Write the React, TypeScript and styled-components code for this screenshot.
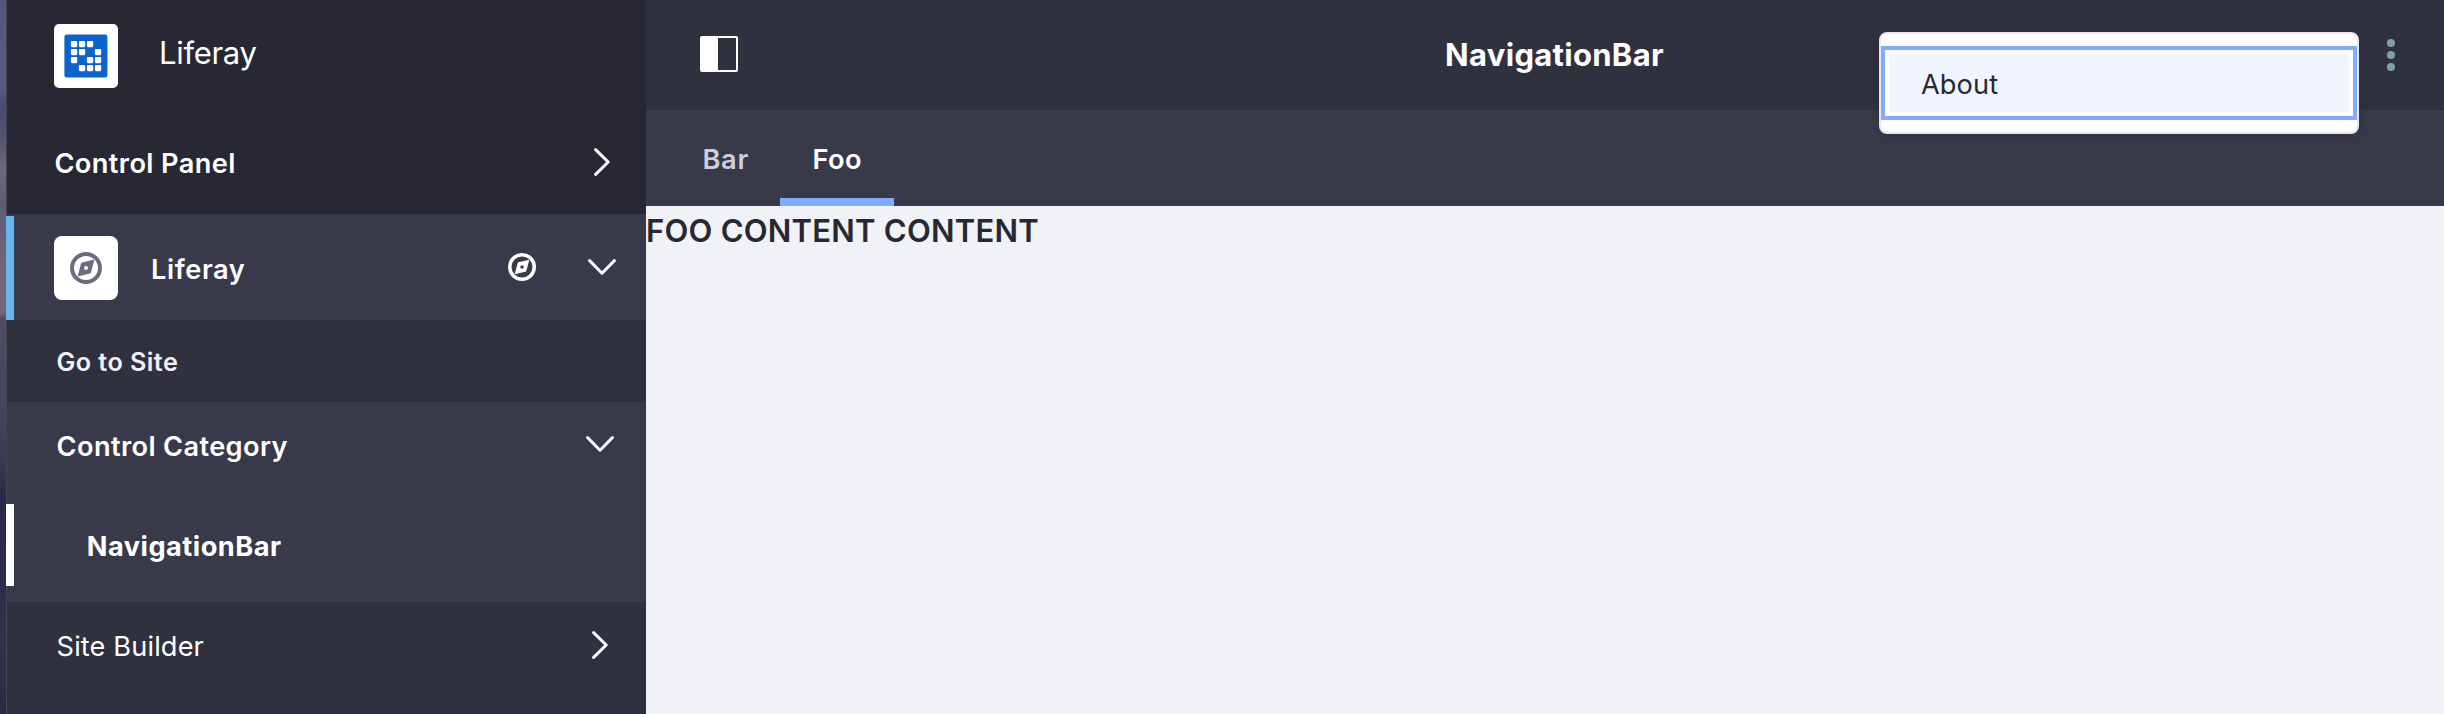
import React from "react";
import styled, { createGlobalStyle } from "styled-components";

const GlobalStyle = createGlobalStyle`
  *, *::before, *::after { box-sizing: border-box; }
  body {
    margin: 0;
    font-family: Inter, "Liberation Sans", sans-serif;
    background: #f1f2f5;
    color: #272833;
    overflow: hidden;
  }
`;

const Page = styled.div`
  display: flex;
  height: 714px;
`;

const DesktopEdge = styled.div`
  width: 6px;
  flex: none;
  background: linear-gradient(
    #525780 0, #5a5d86 85px, #484a70 106px, #55536f 140px, #6d6880 168px,
    #5e5c76 200px, #74657a 275px, #78667a 312px, #4f4c62 320px, #454660 400px,
    #3d3c58 450px, #29274a 500px, #2d2e4c 600px, #313250 640px, #2a2a44 714px
  );
`;

const Sidebar = styled.aside`
  width: 640px;
  flex: none;
  border-left: 1px solid #454655;
  background: #30313f;
`;

const ProductSection = styled.div`
  background: #272833;
  height: 214px;
`;

const BrandRow = styled.div`
  display: flex;
  align-items: center;
  gap: 41px;
  height: 112px;
  padding-left: 47px;
`;

const IconTile = styled.div<{ $radius: number }>`
  display: flex;
  align-items: center;
  justify-content: center;
  width: 64px;
  height: 64px;
  flex: none;
  border-radius: ${(p) => p.$radius}px;
  background: #fff;
`;

const Label = styled.span<{
  $size?: number;
  $weight?: number;
  $tracking?: number;
  $lift?: number;
}>`
  color: #fff;
  font-size: ${(p) => p.$size ?? 27.2}px;
  font-weight: ${(p) => p.$weight ?? 600};
  letter-spacing: ${(p) => p.$tracking ?? 0}px;
  line-height: 40px;
  margin-bottom: ${(p) => p.$lift ?? 0}px;
  white-space: nowrap;
`;

const SiteLink = styled(Label)`
  color: #f1f0fb;
`;

const PanelRow = styled.div<{ $height: number; $left: number; $right?: number }>`
  display: flex;
  align-items: center;
  justify-content: space-between;
  height: ${(p) => p.$height}px;
  padding: 0 ${(p) => p.$right ?? 0}px 0 ${(p) => p.$left}px;
`;

const SiteRow = styled(PanelRow)`
  position: relative;
  background: #393a49;
  padding-top: 2px;

  &::before {
    content: "";
    position: absolute;
    left: -1px;
    top: 2px;
    bottom: 0;
    width: 8px;
    background: #65b6f0;
  }
`;

const SiteIdentity = styled.div`
  display: flex;
  align-items: center;
  gap: 33px;
`;

const SiteActions = styled.div`
  display: flex;
  align-items: center;
  gap: 52px;
  margin-bottom: 2px;
`;

const CategoryGroup = styled.div`
  background: #393a49;
  padding-bottom: 16px;
`;

const ActiveItem = styled(PanelRow)`
  position: relative;
  margin-top: 14px;

  &::before {
    content: "";
    position: absolute;
    left: -1px;
    top: 0;
    bottom: 0;
    width: 8px;
    background: #fff;
  }
`;

const ChevronSvg = styled.svg<{ $raise?: number }>`
  display: block;
  flex: none;
  fill: none;
  stroke: #f7f7fc;
  stroke-width: 3;
  stroke-linecap: round;
  stroke-linejoin: round;
  margin-bottom: ${(p) => p.$raise ?? 0}px;
`;

const Main = styled.main`
  flex: 1;
  min-width: 0;
  background: #f1f2f5;
`;

const ControlBar = styled.header`
  position: relative;
  display: flex;
  align-items: center;
  height: 110px;
  padding: 0 49px 0 54px;
  background: #30313f;
`;

const PanelToggle = styled.div`
  width: 38px;
  height: 36px;
  border: 2px solid #fff;
  border-left-width: 18px;
  border-radius: 2px;
  margin-bottom: 2px;
`;

const PageTitle = styled.h1`
  flex: 1;
  margin: 0 16px 0 0;
  color: #fff;
  text-align: center;
  font-size: 31px;
  font-weight: 700;
  letter-spacing: 0.3px;
  line-height: 40px;
`;

const MoreButton = styled.div`
  display: flex;
  flex-direction: column;
  gap: 4px;
`;

const Dot = styled.i`
  width: 8px;
  height: 8px;
  border-radius: 50%;
  background: #869cad;
`;

const DropdownMenu = styled.div`
  position: absolute;
  top: 32px;
  right: 85px;
  width: 480px;
  height: 102px;
  padding: 12px 0;
  border: 2px solid #e7e7ed;
  border-radius: 8px;
  background: #fff;
  box-shadow: 0 2px 8px rgba(39, 40, 51, 0.4);
`;

const DropdownItem = styled.div`
  display: flex;
  align-items: center;
  height: 74px;
  padding: 4px 40px 0;
  background: #f0f5ff;
  box-shadow: inset 0 0 0 4px #80acff, inset 0 0 0 8px #fff;
  color: #272833;
  font-size: 27.2px;
  letter-spacing: 0.1px;
  line-height: 40px;
`;

const Tabs = styled.nav`
  display: flex;
  height: 96px;
  padding-left: 24px;
  background: #393a49;
`;

const Tab = styled.div<{ $active?: boolean; $width: number; $tracking: number }>`
  width: ${(p) => p.$width}px;
  padding: 30px 0 0 32.5px;
  color: ${(p) => (p.$active ? "#fff" : "#cdced9")};
  border-bottom: 8px solid ${(p) => (p.$active ? "#80acff" : "transparent")};
  font-size: 27.2px;
  font-weight: 600;
  letter-spacing: ${(p) => p.$tracking}px;
  line-height: 40px;
`;

const Content = styled.div`
  padding-top: 5px;
  font-size: 31px;
  font-weight: 600;
  letter-spacing: 0.24px;
  line-height: 40px;
`;

const logoCells: [number, number][] = [
  [0, 0], [1, 0], [2, 0],
  [0, 1], [1, 1], [3, 1],
  [0, 2], [2, 2], [3, 2],
  [1, 3], [2, 3], [3, 3],
];

function LiferayLogo() {
  return (
    <svg width="44" height="44" viewBox="0 0 44 44">
      <rect x="0.4" y="0.4" width="43" height="43" rx="2.5" fill="#0b63ce" />
      {logoCells.map(([col, row]) => (
        <rect
          key={`${col}-${row}`}
          x={6.9 + col * 8}
          y={6.9 + row * 8}
          width="6.3"
          height="6.3"
          rx="1.1"
          fill="#fff"
        />
      ))}
    </svg>
  );
}

function Compass({ size, color, strokeWidth }: { size: number; color: string; strokeWidth: number }) {
  return (
    <svg width={size} height={size} viewBox="0 0 32 32" fill="none">
      <circle cx="16" cy="16" r={16 - strokeWidth / 2} stroke={color} strokeWidth={strokeWidth} />
      <path
        fill={color}
        fillRule="evenodd"
        d="M24.4 7.6 L12 10.6 Q11.2 10.9 11 11.6 L7.6 24.4 L20 21.4 Q20.8 21.1 21 20.4 Z M16 14 A2 2 0 1 1 16 18 A2 2 0 1 1 16 14 Z"
      />
    </svg>
  );
}

function ChevronRight({ raise }: { raise?: number }) {
  return (
    <ChevronSvg $raise={raise} width="16" height="28" viewBox="0 0 16 28">
      <path d="M1.6 1.6 L14.2 14 L1.6 26.4" />
    </ChevronSvg>
  );
}

function ChevronDown({ raise }: { raise?: number }) {
  return (
    <ChevronSvg $raise={raise} width="28" height="16" viewBox="0 0 28 16">
      <path d="M1.6 1.6 L14 14.2 L26.4 1.6" />
    </ChevronSvg>
  );
}

export default function App() {
  return (
    <>
      <GlobalStyle />
      <Page>
        <DesktopEdge />
        <Sidebar>
          <ProductSection>
            <BrandRow>
              <IconTile $radius={5}>
                <LiferayLogo />
              </IconTile>
              <Label $size={31} $weight={400} $tracking={-0.3} $lift={6}>Liferay</Label>
            </BrandRow>
            <PanelRow $height={102} $left={47.4} $right={36}>
              <Label $tracking={0.4} $lift={-2}>Control Panel</Label>
              <ChevronRight raise={2} />
            </PanelRow>
          </ProductSection>
          <SiteRow $height={106} $left={47} $right={30}>
            <SiteIdentity>
              <IconTile $radius={8}>
                <Compass size={32} color="#6b6c7e" strokeWidth={4} />
              </IconTile>
              <Label $tracking={0.6} $lift={-4}>Liferay</Label>
            </SiteIdentity>
            <SiteActions>
              <Compass size={28} color="#fff" strokeWidth={4} />
              <ChevronDown />
            </SiteActions>
          </SiteRow>
          <PanelRow $height={82} $left={49.4}>
            <SiteLink $size={25.2} $weight={600} $tracking={0.45} $lift={-1}>Go to Site</SiteLink>
          </PanelRow>
          <CategoryGroup>
            <PanelRow $height={88} $left={49.6} $right={32}>
              <Label $tracking={0.37} $lift={-2}>Control Category</Label>
              <ChevronDown raise={4} />
            </PanelRow>
            <ActiveItem $height={82} $left={79.8}>
              <Label $weight={700} $tracking={0.48} $lift={-4}>NavigationBar</Label>
            </ActiveItem>
          </CategoryGroup>
          <PanelRow $height={88} $left={49.6} $right={38}>
            <Label $weight={400} $tracking={0.12} $lift={-2}>Site Builder</Label>
            <ChevronRight raise={2} />
          </PanelRow>
        </Sidebar>
        <Main>
          <ControlBar>
            <PanelToggle />
            <PageTitle>NavigationBar</PageTitle>
            <MoreButton>
              <Dot />
              <Dot />
              <Dot />
            </MoreButton>
            <DropdownMenu>
              <DropdownItem>About</DropdownItem>
            </DropdownMenu>
          </ControlBar>
          <Tabs>
            <Tab $width={110} $tracking={0.7}>Bar</Tab>
            <Tab $active $width={114} $tracking={0.4}>Foo</Tab>
          </Tabs>
          <Content>FOO CONTENT CONTENT</Content>
        </Main>
      </Page>
    </>
  );
}
